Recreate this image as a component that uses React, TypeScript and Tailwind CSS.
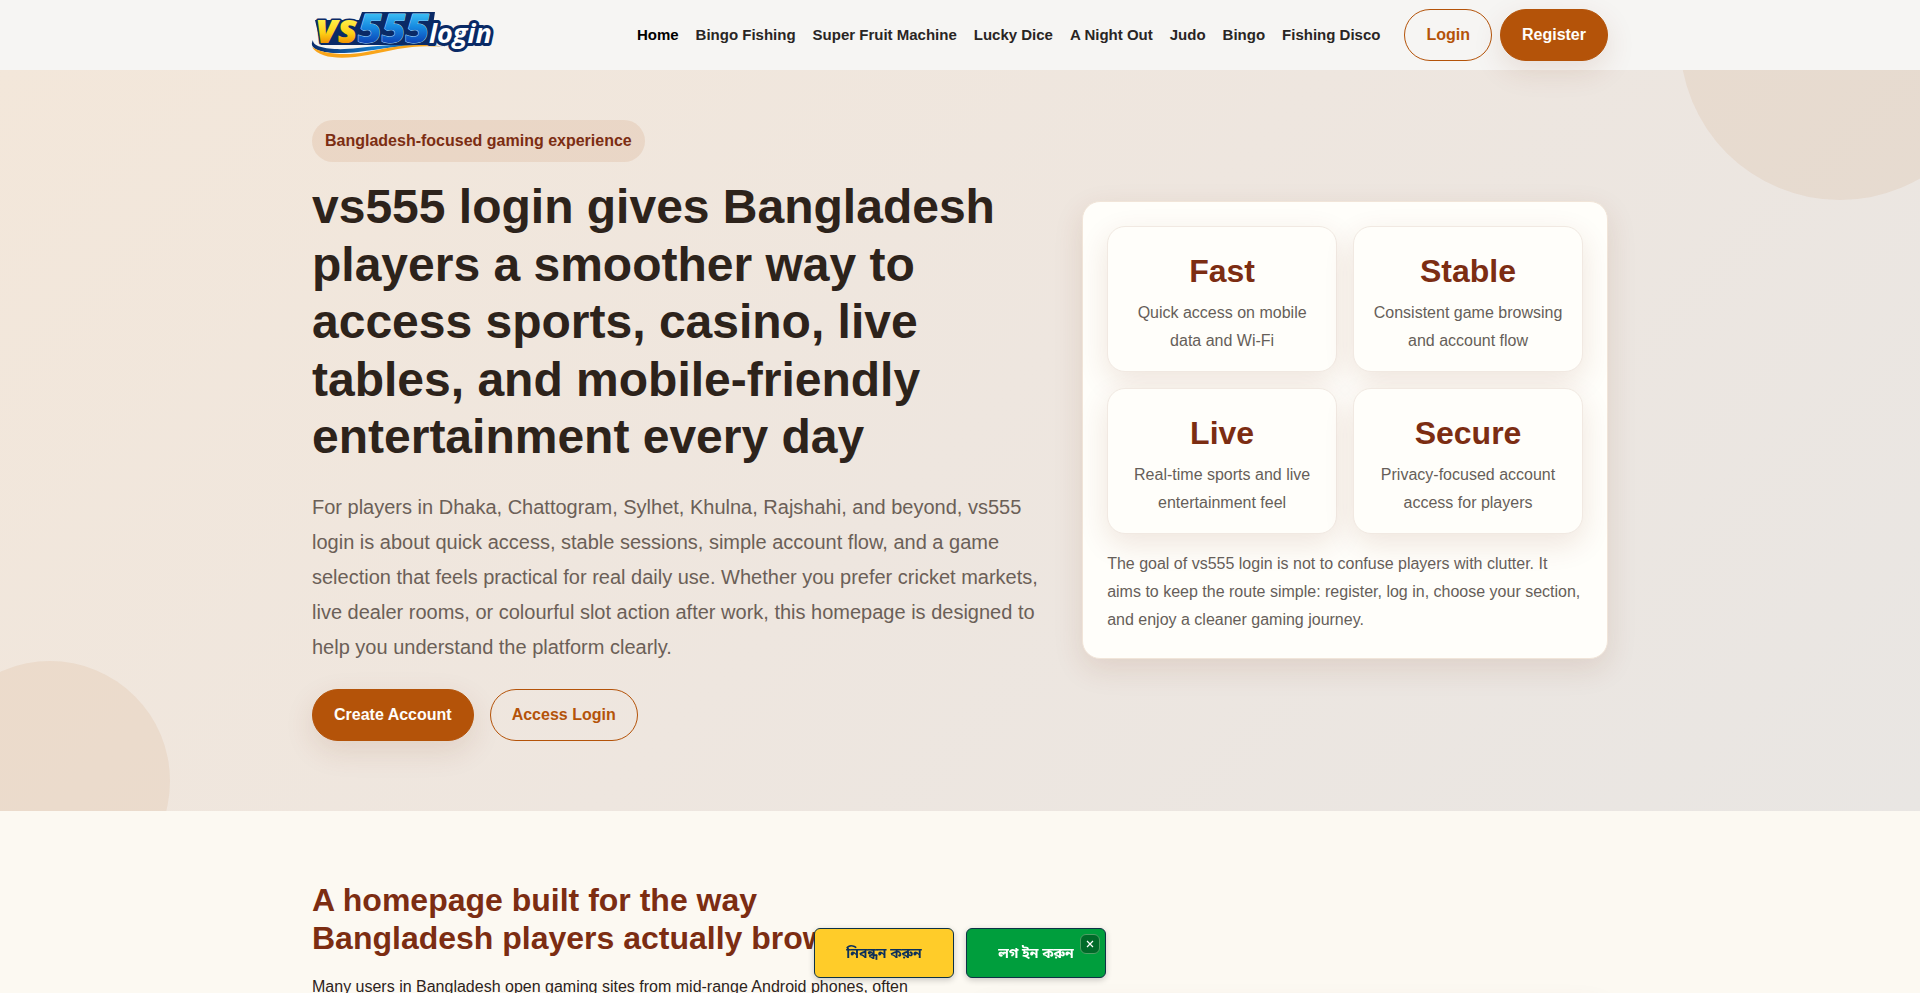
const navLinks = [
  "Home",
  "Bingo Fishing",
  "Super Fruit Machine",
  "Lucky Dice",
  "A Night Out",
  "Judo",
  "Bingo",
  "Fishing Disco",
];

const stats = [
  { title: "Fast", text: "Quick access on mobile data and Wi-Fi" },
  { title: "Stable", text: "Consistent game browsing and account flow" },
  { title: "Live", text: "Real-time sports and live entertainment feel" },
  { title: "Secure", text: "Privacy-focused account access for players" },
];

function Logo() {
  return (
    <svg
      className="h-[50px] w-[184px] overflow-visible"
      viewBox="2 0 184 50"
      role="img"
      aria-label="vs555 login"
    >
      <defs>
        <linearGradient id="gold" x1="0" y1="0" x2="0" y2="1">
          <stop offset="0.35" stopColor="#fff04a" />
          <stop offset="0.6" stopColor="#fdd116" />
          <stop offset="0.8" stopColor="#f08c00" />
        </linearGradient>
        <linearGradient id="blue" x1="0" y1="0" x2="0" y2="1">
          <stop offset="0.25" stopColor="#3cc0f5" />
          <stop offset="0.5" stopColor="#1689e0" />
          <stop offset="0.8" stopColor="#0b3fb4" />
        </linearGradient>
        <linearGradient id="swoosh" x1="0" y1="0" x2="1" y2="0">
          <stop offset="0" stopColor="#0b2c6b" />
          <stop offset="0.5" stopColor="#1680d0" />
          <stop offset="1" stopColor="#0b2c6b" />
        </linearGradient>
      </defs>
      <path d="M3 30C-4 42 22 45 48 42C82 38 100 33 136 37C102 32 78 35 48 38C24 41 2 38 3 30Z" fill="url(#swoosh)" />
      <path d="M2 37C10 50 36 49 58 45C84 40 104 34 132 37C104 32 82 37 56 42C36 46 12 44 2 37Z" fill="#f9a51a" />
      <path d="M5 10H49L52 2H125L120 35H11Z" fill="#0a2a66" />
      <g
        fontFamily="Open Sans, sans-serif"
        fontStyle="italic"
        fontWeight="800"
        strokeLinejoin="round"
        paintOrder="stroke"
      >
        <text x="119" y="33" fontSize="27" fontWeight="700" fill="#fff" stroke="#0a2a66" strokeWidth="6">
          login
        </text>
        <text x="6" y="33" fontSize="40" fill="url(#gold)" stroke="#0a2a66" strokeWidth="3">
          vs
        </text>
        <text x="48" y="33" fontSize="41" fill="url(#blue)" stroke="#9fd8fa" strokeWidth="1">
          555
        </text>
      </g>
    </svg>
  );
}

function Pill({ children, outline }: { children: React.ReactNode; outline?: boolean }) {
  const base = "rounded-full border border-[#b45309] px-[21px] py-[11px] text-base/7 font-bold";
  return (
    <button
      type="button"
      className={
        outline
          ? `${base} text-[#b45309]`
          : `${base} bg-[#b45309] text-[#fffefa] shadow-[0_10px_30px_rgba(120,53,15,0.12)]`
      }
    >
      {children}
    </button>
  );
}

function Header() {
  return (
    <header className="relative z-10 bg-[#f6f5f3]">
      <div className="mx-auto flex h-[70px] max-w-[1328px] items-center justify-between px-4">
        <a href="#">
          <Logo />
        </a>
        <div className="flex items-center gap-6">
          <nav className="flex gap-[17px] text-[15px] font-bold text-[#292524]">
            {navLinks.map((link) => (
              <a key={link} href="#" className="first:text-black">
                {link}
              </a>
            ))}
          </nav>
          <div className="flex gap-2">
            <Pill outline>Login</Pill>
            <Pill>Register</Pill>
          </div>
        </div>
      </div>
    </header>
  );
}

function Hero() {
  return (
    <section className="relative overflow-hidden bg-linear-135 from-[#f3e7da] via-[#eee6df] to-[#e9e6e3]">
      <div className="absolute -top-[190px] -right-20 size-80 rounded-full bg-[#b45309]/8" />
      <div className="absolute -bottom-[90px] -left-[70px] size-60 rounded-full bg-[#b45309]/8" />
      <div className="relative mx-auto grid max-w-[1328px] grid-cols-[1.4fr_1fr] items-center gap-[34px] px-4 pt-[50px] pb-[70px]">
        <div>
          <span className="inline-block rounded-full bg-[#b45309]/10 px-[13px] py-[7px] align-top text-base/7 font-bold text-[#7c2d12]">
            Bangladesh-focused gaming experience
          </span>
          <h1 className="mt-4 text-5xl leading-[1.2] font-bold text-[#2d231b]">
            vs555 login gives Bangladesh players a smoother way to access sports, casino, live
            tables, and mobile-friendly entertainment every day
          </h1>
          <p className="mt-6 text-xl/[35px] text-[#6b5f57]">
            For players in Dhaka, Chattogram, Sylhet, Khulna, Rajshahi, and beyond, vs555 login is
            about quick access, stable sessions, simple account flow, and a game selection that
            feels practical for real daily use. Whether you prefer cricket markets, live dealer
            rooms, or colourful slot action after work, this homepage is designed to help you
            understand the platform clearly.
          </p>
          <div className="mt-6 flex gap-4">
            <Pill>Create Account</Pill>
            <Pill outline>Access Login</Pill>
          </div>
        </div>

        <div className="rounded-[18px] border border-[#f1e5d9] bg-[#fffefa] p-6 shadow-[0_10px_30px_rgba(120,53,15,0.12)]">
          <div className="grid grid-cols-2 gap-4">
            {stats.map((stat) => (
              <div
                key={stat.title}
                className="rounded-[18px] border border-[#f1e9e2] bg-[#fffefa] p-4 text-center shadow-[0_10px_30px_rgba(120,53,15,0.12)]"
              >
                <h3 className="text-[32px]/14 font-bold text-[#7c2d12]">{stat.title}</h3>
                <p className="text-base/7 text-[#665e59]">{stat.text}</p>
              </div>
            ))}
          </div>
          <p className="mt-4 text-base/7 text-[#665e59]">
            The goal of vs555 login is not to confuse players with clutter. It aims to keep the
            route simple: register, log in, choose your section, and enjoy a cleaner gaming journey.
          </p>
        </div>
      </div>
    </section>
  );
}

function Intro() {
  return (
    <section className="mx-auto grid max-w-[1328px] grid-cols-2 gap-8 px-4 py-[70px]">
      <div>
        <h2 className="text-[32px]/[38px] font-bold text-[#7c2d12]">
          A homepage built for the way Bangladesh players actually browse
        </h2>
        <p className="mt-4 text-base/7 text-[#2d231b]">
          Many users in Bangladesh open gaming sites from mid-range Android phones, often switching
          between mobile data and home Wi-Fi.
        </p>
      </div>
      <div className="mt-30 h-60 rounded-[18px] border border-[#f1e5d9] bg-[#fffefa] shadow-[0_10px_30px_rgba(120,53,15,0.12)]" />
    </section>
  );
}

function FloatingActions() {
  const button =
    "h-[50px] w-[140px] rounded-md border border-[#0d3245] pt-1 text-sm font-bold shadow-[0_2px_6px_rgba(0,0,0,0.2)]";
  return (
    <div className="fixed bottom-[15px] left-1/2 z-20 flex -translate-x-1/2 gap-3 font-['Noto_Sans_Bengali','Liberation_Sans',sans-serif]">
      <button type="button" className={`${button} bg-[#ffcc29] text-[#0b2f5b]`}>
        নিবন্ধন করুন
      </button>
      <button type="button" className={`${button} bg-[#009e3d] text-white`}>
        লগ ইন করুন
      </button>
      <button
        type="button"
        aria-label="Close"
        className="absolute top-1.5 right-1.5 flex size-5 items-center justify-center rounded-md border border-[#4d9e63] bg-[#006b29] text-white"
      >
        <svg viewBox="0 0 8 8" className="size-2" stroke="currentColor" strokeWidth="1.2">
          <path d="M1 1L7 7M7 1L1 7" />
        </svg>
      </button>
    </div>
  );
}

export default function App() {
  return (
    <div className="min-h-screen bg-[#fcf9f2] font-['Liberation_Sans',Arial,sans-serif]">
      <Header />
      <main>
        <Hero />
        <Intro />
      </main>
      <FloatingActions />
    </div>
  );
}
